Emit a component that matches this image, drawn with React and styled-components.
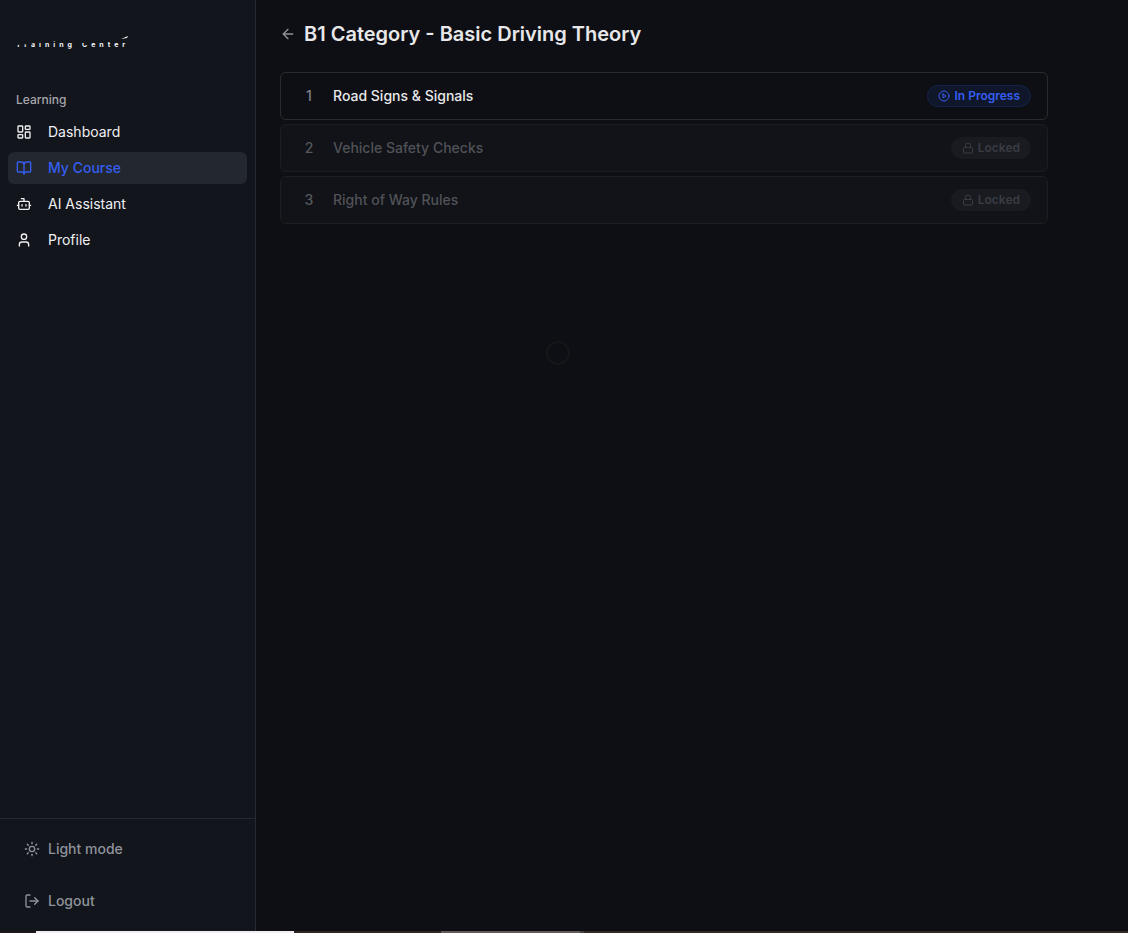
import React, { useState } from "react";
import styled, { createGlobalStyle } from "styled-components";
import {
  ArrowLeft,
  BookOpen,
  Bot,
  LayoutDashboard,
  Lock,
  LogOut,
  Sun,
  User,
} from "lucide-react";

const links = [
  { id: "dashboard", label: "Dashboard", Icon: LayoutDashboard },
  { id: "course", label: "My Course", Icon: BookOpen },
  { id: "assistant", label: "AI Assistant", Icon: Bot },
  { id: "profile", label: "Profile", Icon: User },
];

const lessons = [
  { title: "Road Signs & Signals", locked: false },
  { title: "Vehicle Safety Checks", locked: true },
  { title: "Right of Way Rules", locked: true },
];

//only the lower edge of the wordmark shows on the dark theme
function Logo() {
  return (
    <svg width="120" height="28" viewBox="0 0 120 28" role="img" aria-label="Training Center">
      <clipPath id="wordmarkEdge">
        <path d="M0 21 L14 20 L22 18 L44 17 L62 17 L64 19 L72 19 L76 17 L90 16 L120 15 V28 H0 Z" />
      </clipPath>
      <g clipPath="url(#wordmarkEdge)">
        <text
          y="23"
          fill="#f4f4f5"
          fontFamily="Inter, sans-serif"
          fontSize="7"
          fontWeight="700"
          letterSpacing="4"
        >
          <tspan x="0">Training</tspan>
          <tspan x="66">Center</tspan>
        </text>
      </g>
      <path d="M105 15 L112 12 L111 14 Z" fill="#f4f4f5" />
    </svg>
  );
}

function PlayIcon() {
  return (
    <svg
      width="12"
      height="12"
      viewBox="0 0 24 24"
      fill="none"
      stroke="currentColor"
      strokeWidth="2"
      strokeLinecap="round"
      strokeLinejoin="round"
      aria-hidden="true"
    >
      <circle cx="12" cy="12" r="10" />
      <polygon points="10 8 16 12 10 16 10 8" />
    </svg>
  );
}

function Sidebar() {
  const [currentPage, setCurrentPage] = useState("course");
  return (
    <SideWrapper>
      <SideHeader>
        <Logo />
      </SideHeader>
      <SideNav aria-label="Learning">
        <GroupLabel>Learning</GroupLabel>
        <NavList>
          {links.map(({ id, label, Icon }) => (
            <li key={id}>
              <NavLink
                href={"#" + id}
                $lit={currentPage === id}
                onClick={() => setCurrentPage(id)}
              >
                <Icon size={16} />
                {label}
              </NavLink>
            </li>
          ))}
        </NavList>
      </SideNav>
      <SideFooter>
        <FooterButton type="button">
          <Sun size={16} />
          Light mode
        </FooterButton>
        <FooterButton type="button">
          <LogOut size={16} />
          Logout
        </FooterButton>
      </SideFooter>
    </SideWrapper>
  );
}

function Lesson({ number, title, locked }) {
  return (
    <li>
      <LessonButton type="button" disabled={locked}>
        <LessonNumber>{number}</LessonNumber>
        <LessonTitle>{title}</LessonTitle>
        <Badge $locked={locked}>
          {locked ? <Lock size={12} /> : <PlayIcon />}
          {locked ? "Locked" : "In Progress"}
        </Badge>
      </LessonButton>
    </li>
  );
}

export default function App() {
  return (
    <Page>
      <GlobalStyle />
      <Body>
        <Sidebar />
        <Main>
          <TitleRow>
            <BackLink href="#courses" aria-label="Back to courses">
              <ArrowLeft size={16} />
            </BackLink>
            <Title>B1 Category - Basic Driving Theory</Title>
          </TitleRow>
          <LessonList>
            {lessons.map((lesson, i) => (
              <Lesson key={lesson.title} number={i + 1} {...lesson} />
            ))}
          </LessonList>
        </Main>
      </Body>
      <BottomEdge aria-hidden="true">
        <Segment $width="36px" $color="#1d191a" />
        <Segment $width="258px" $color="#f1eef1" />
        <Segment $width="147px" $color="#302722" />
        <Segment $width="139px" $color="#625b59" />
        <Segment $width="4px" $color="#45403d" />
        <Segment $grow $color="#332c26" />
      </BottomEdge>
      <PointerRing aria-hidden="true" />
    </Page>
  );
}

const GlobalStyle = createGlobalStyle`
  * {
    box-sizing: border-box;
  }
  body {
    margin: 0;
    background: #0e0f14;
    color: #e8e8ea;
    font-family: Inter, "Liberation Sans", sans-serif;
    font-size: 14px;
    line-height: 20px;
  }
  button {
    font: inherit;
    cursor: pointer;
  }
  ul, ol {
    list-style: none;
    margin: 0;
    padding: 0;
  }
  svg {
    display: block;
    flex-shrink: 0;
  }
`;

const Page = styled.div`
  display: flex;
  flex-direction: column;
  min-height: 100vh;
`;

const Body = styled.div`
  display: flex;
  flex: 1;
`;

const SideWrapper = styled.aside`
  display: flex;
  flex-direction: column;
  flex: 0 0 256px;
  background: #12151c;
  border-right: 1px solid #26292f;
`;

const SideHeader = styled.div`
  display: flex;
  align-items: center;
  height: 76px;
  padding: 0 16px;
`;

const SideNav = styled.nav`
  flex: 1;
  padding: 8px;
`;

const GroupLabel = styled.div`
  display: flex;
  align-items: center;
  height: 32px;
  padding: 0 8px;
  color: #a5a6aa;
  font-size: 12px;
  font-weight: 500;
`;

const NavList = styled.ul`
  display: flex;
  flex-direction: column;
  gap: 4px;
`;

const NavLink = styled.a`
  display: flex;
  align-items: center;
  gap: 16px;
  height: 32px;
  padding: 0 8px;
  border-radius: 6px;
  font-weight: ${(props) => (props.$lit ? "500" : "400")};
  text-decoration: none;
  color: ${(props) => (props.$lit ? "#355ef0" : "#f0f0f2")};
  background: ${(props) => (props.$lit ? "#23272e" : "transparent")};
`;

const SideFooter = styled.div`
  display: flex;
  flex-direction: column;
  gap: 16px;
  padding: 12px;
  border-top: 1px solid #26292f;
`;

const FooterButton = styled.button`
  display: flex;
  align-items: center;
  gap: 8px;
  height: 36px;
  padding: 0 12px;
  border: 0;
  border-radius: 6px;
  background: none;
  color: #8f939b;
  font-weight: 500;
`;

const Main = styled.main`
  flex: 1;
  min-width: 0;
  padding: 20px 24px;
`;

const TitleRow = styled.div`
  display: flex;
  align-items: center;
  gap: 8px;
  margin-bottom: 24px;
`;

const BackLink = styled.a`
  color: #8f939b;
`;

const Title = styled.h1`
  margin: 0;
  font-size: 20px;
  font-weight: 600;
  line-height: 28px;
`;

const LessonList = styled.ol`
  display: flex;
  flex-direction: column;
  gap: 4px;
  max-width: 768px;
`;

const LessonButton = styled.button`
  display: flex;
  align-items: center;
  gap: 12px;
  width: 100%;
  height: 48px;
  padding: 0 16px;
  border: 1px solid #2a2b2e;
  border-radius: 6px;
  background: #0e0f14;
  color: #e8e8ea;
  font-weight: 500;
  text-align: left;

  &:disabled {
    border-color: #1c1e22;
    background: #111318;
    color: #505257;
    cursor: not-allowed;
  }
`;

const LessonNumber = styled.span`
  width: 24px;
  text-align: center;
  color: #7d8087;

  ${LessonButton}:disabled & {
    color: #55575c;
  }
`;

const LessonTitle = styled.span`
  flex: 1;
`;

const Badge = styled.span`
  display: flex;
  align-items: center;
  gap: 4px;
  height: 22px;
  padding: 0 10px;
  border: 1px solid ${(props) => (props.$locked ? "#191b21" : "#15234b")};
  border-radius: 11px;
  background: ${(props) => (props.$locked ? "#191b21" : "#10172a")};
  color: ${(props) => (props.$locked ? "#393c43" : "#355ef0")};
  font-size: 12px;
  font-weight: 600;
`;

const BottomEdge = styled.div`
  display: flex;
  height: 2px;
`;

const Segment = styled.div`
  flex: ${(props) => (props.$grow ? "1" : "0 1 " + props.$width)};
  background: ${(props) => props.$color};
`;

const PointerRing = styled.div`
  position: fixed;
  top: 341px;
  left: 546px;
  width: 24px;
  height: 24px;
  border: 2px solid #15161a;
  border-radius: 50%;
  pointer-events: none;
`;
